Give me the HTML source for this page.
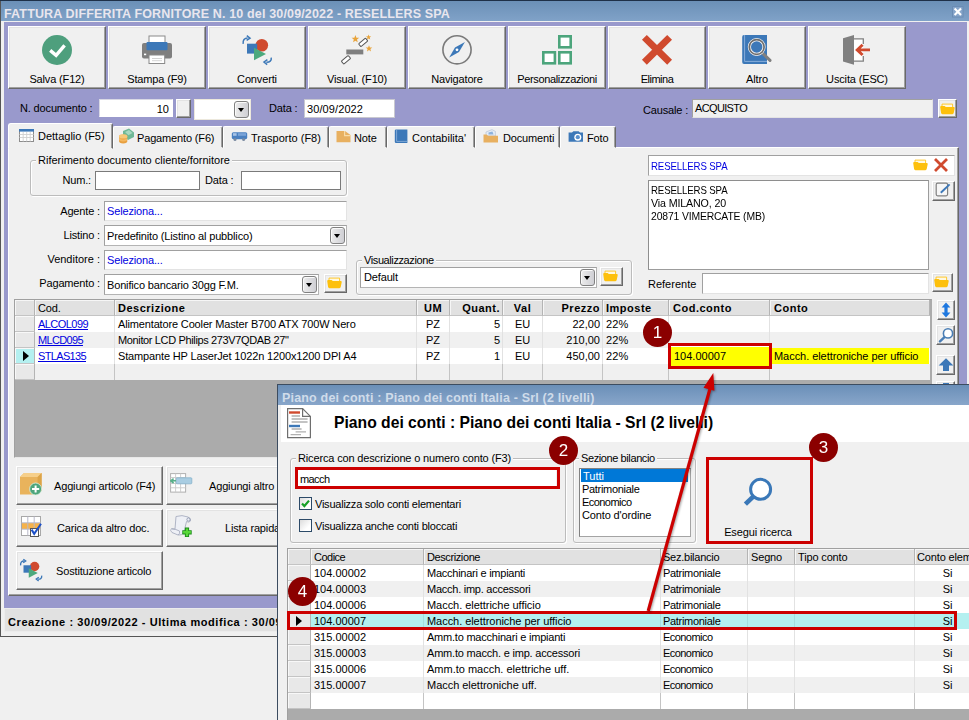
<!DOCTYPE html>
<html><head><meta charset="utf-8"><title>Fattura differita fornitore</title>
<style>
*{box-sizing:border-box;margin:0;padding:0}
html,body{width:969px;height:720px;overflow:hidden;background:#f0f0f0}
body{position:relative;font-family:"Liberation Sans",sans-serif;font-size:11px;color:#000;letter-spacing:-0.15px;line-height:13px}
.a{position:absolute;white-space:nowrap}
.btn{position:absolute;background:#f0f0f0;border:1px solid;border-color:#fff #696969 #696969 #fff;box-shadow:inset -1px -1px 0 #a0a0a0,inset 1px 1px 0 #e3e3e3}
.tb{width:98px;height:63px;top:26px}
.tb span{position:absolute;left:0;right:0;top:46px;text-align:center;font-size:11px}
.inp{position:absolute;background:#fff;border:1px solid #7a7a7a}
.sunk{position:absolute;background:#fff;border:1px solid;border-color:#a0a0a0 #e3e3e3 #e3e3e3 #a0a0a0}
.lbl{position:absolute;white-space:nowrap}
.sx{display:inline-block;transform-origin:0 50%;white-space:nowrap}
.r{text-align:right}
.tab{position:absolute;top:126px;height:22px;background:#f0f0f0;border:1px solid;border-color:#fff #696969 #f0f0f0 #fff;border-radius:2px 2px 0 0;box-shadow:inset -1px 0 0 #a0a0a0}
.tab span{position:absolute;top:5px;white-space:nowrap;font-size:11px}
.gb{position:absolute;border:1px solid #bcbcbc;border-radius:3px;box-shadow:inset 1px 1px 0 #fff,1px 1px 0 #fff}
.gb>i{position:absolute;top:-7px;left:5px;background:#f0f0f0;padding:0 2px;font-style:normal;white-space:nowrap}
.dd{position:absolute;width:15px;height:17px;background:linear-gradient(90deg,#ececec,#cfcfd4);border:1px solid #808080;border-radius:3px;box-shadow:inset 1px 1px 0 #fafafa}
.dd:after{content:"";position:absolute;left:3px;top:6px;border:3.700px solid transparent;border-top:4.200px solid #000;border-bottom:0}
.cb{border-color:#a0a0a0 #b4b4b4 #b4b4b4 #a0a0a0}
.circ{position:absolute;width:29.2px;height:29.2px;border-radius:15px;background:#8b0000;color:#fff;font-size:17px;text-align:center;line-height:29.2px;letter-spacing:0;will-change:transform}
.red{position:absolute;border:3px solid #cc0000}
</style></head><body>

<svg width="0" height="0" style="position:absolute"><defs>
<g id="fold"><path d="M2 0.600 H12.600 V4.500 H2Z" fill="#fff8e0" stroke="#ffc41a" stroke-width="0.900"/><path d="M0.200 3.400 Q0.200 2.400 1.200 2.400 H4.600 L5.800 3.600 H13.800 Q14.900 3.600 14.700 4.700 L13.700 9.600 Q13.500 10.700 12.400 10.700 H2.400 Q1.300 10.700 1.100 9.600Z" fill="#fdc00c"/></g>
</defs></svg>
<!-- main window frame -->
<div class="a" id="win" style="left:0;top:0;width:975px;height:637px;background:#f0f0f0;border:1px solid #555"></div>
<div class="a" id="title" style="left:1px;top:1px;width:968px;height:20px;background:linear-gradient(#6b90b7,#80a2c8)"></div>
<div class="a" style="left:0;top:0;width:969px;height:1px;background:#1e3048"></div>
<div class="a" id="ttext" style="left:4px;top:7px;font-weight:bold;font-size:12.5px;color:#e9e6ee;letter-spacing:0.15px;line-height:14px">FATTURA DIFFERITA FORNITORE N. 10 del 30/09/2022 - RESELLERS SPA</div>
<svg class="a" style="left:952px;top:6px" width="12" height="12"><rect x="0.5" y="0.5" width="10.500" height="10.500" fill="#86a5ca" stroke="#6a8cb4"/><path d="M2.600 2.600 L9 9 M9 2.600 L2.600 9" stroke="#fff" stroke-width="2.100"/></svg>
<div class="a" id="purple" style="left:4px;top:22px;width:963px;height:586px;background:#9999cc"></div>
<!-- status bar -->
<div class="a" style="left:4px;top:608px;width:963px;height:24px;background:#e1e1e1;border:1px solid #ececec"></div>
<div class="a" style="left:8px;top:616px;font-weight:bold;font-size:11px;letter-spacing:0.58px">Creazione : 30/09/2022 - Ultima modifica : 30/09/2022</div>

<!-- toolbar -->
<div class="btn tb" style="left:8px"><svg style="position:absolute;left:32px;top:7px" width="32" height="32" viewBox="0 0 32 32"><circle cx="16" cy="16" r="15" fill="#4e9f7d"/><path d="M9.2 16.4 L15.1 21.3 L23.6 11.4" fill="none" stroke="#fff" stroke-width="3.4"/></svg><span>Salva (F12)</span></div>
<div class="btn tb" style="left:108px"><svg style="position:absolute;left:32px;top:7px" width="32" height="32" viewBox="0 0 32 32"><rect x="8" y="2" width="16" height="7" fill="#fff" stroke="#8a8a8a" stroke-width="1"/><rect x="1" y="9" width="30" height="15.5" rx="2" fill="#7f7f7f"/><rect x="5.5" y="8" width="21" height="8.3" rx="1" fill="#3c78b8"/><rect x="8" y="21" width="15.7" height="8.5" fill="#fff" stroke="#8a8a8a" stroke-width="1"/><path d="M11 24.5h10M11 26.7h10" stroke="#c8c8c8" stroke-width="0.8"/><rect x="3" y="19.6" width="2.2" height="1.6" fill="#fff"/></svg><span>Stampa (F9)</span></div>
<div class="btn tb" style="left:208px"><svg style="position:absolute;left:32px;top:7px" width="32" height="32" viewBox="0 0 32 32"><circle cx="20.8" cy="11.3" r="6.3" fill="#d04a2e"/><rect x="6" y="9.7" width="10.2" height="9.9" fill="#3c78b8"/><path d="M13 13.8 L25 20 L13 26.2Z" fill="#4ca97d"/><path d="M2.2 9.8 C1.6 6.2 3.6 4 6.6 4" fill="none" stroke="#3c78b8" stroke-width="1.5"/><path d="M5.8 1.6 L9 4.1 L5.6 6.4" fill="none" stroke="#3c78b8" stroke-width="1.5"/><path d="M30.2 23.6 C30.8 26.8 28.6 28.4 25.4 28.2" fill="none" stroke="#3c78b8" stroke-width="1.5"/><path d="M26.4 25.6 L23 28 L26.2 30.6" fill="none" stroke="#3c78b8" stroke-width="1.5"/></svg><span>Converti</span></div>
<div class="btn tb" style="left:308px"><svg style="position:absolute;left:32px;top:7px" width="32" height="32" viewBox="0 0 32 32"><rect x="5.3" y="15.5" width="17" height="4.9" fill="#7f7f7f"/><rect x="17.700" y="6.500" width="9" height="3.800" rx="0.800" fill="#fff" stroke="#555" stroke-width="1" transform="rotate(-40 22.200 8.400)"/><rect x="0.500" y="23.900" width="9" height="3.800" rx="0.800" fill="#fff" stroke="#555" stroke-width="1" transform="rotate(-40 5 25.800)"/><path id="st" d="M0 -3.4 L0.9 -1.1 L3.3 -1 L1.4 0.5 L2 2.8 L0 1.5 L-2 2.8 L-1.4 0.5 L-3.3 -1 L-0.9 -1.1Z" fill="#e8a33a" transform="translate(14.400 5) scale(1.150)"/><path d="M0 -3.4 L0.9 -1.1 L3.3 -1 L1.4 0.5 L2 2.8 L0 1.5 L-2 2.8 L-1.4 0.5 L-3.3 -1 L-0.9 -1.1Z" fill="#e8a33a" transform="translate(27.600 3.200) scale(0.800)"/><path d="M0 -3.4 L0.9 -1.1 L3.3 -1 L1.4 0.5 L2 2.8 L0 1.5 L-2 2.8 L-1.4 0.5 L-3.3 -1 L-0.9 -1.1Z" fill="#e8a33a" transform="translate(28 14.600) scale(1)"/></svg><span>Visual. (F10)</span></div>
<div class="btn tb" style="left:408px"><svg style="position:absolute;left:32px;top:7px" width="32" height="32" viewBox="0 0 32 32"><circle cx="16" cy="15.8" r="14.1" fill="none" stroke="#7a7a7a" stroke-width="1.6"/><path d="M8.2 23.6 L14 13.6 L23.9 8 L18 18Z" fill="#3c78b8"/><circle cx="16" cy="15.8" r="1.4" fill="#fff"/></svg><span>Navigatore</span></div>
<div class="btn tb" style="left:508px"><svg style="position:absolute;left:32px;top:7px" width="32" height="32" viewBox="0 0 32 32"><g fill="#fff" stroke="#4ca57c" stroke-width="2.6"><rect x="18.3" y="2.3" width="11.4" height="11"/><rect x="2.3" y="18.3" width="11.6" height="11"/><rect x="18.3" y="18.3" width="11.4" height="11"/></g></svg><span style="letter-spacing:-0.35px">Personalizzazioni</span></div>
<div class="btn tb" style="left:608px"><svg style="position:absolute;left:32px;top:7px" width="32" height="32" viewBox="0 0 32 32"><path d="M3.400 3.400 L28.600 28.200 M28.600 3.400 L3.400 28.200" stroke="#d04a2e" stroke-width="6.900"/></svg><span style="letter-spacing:-0.5px">Elimina</span></div>
<div class="btn tb" style="left:708px"><svg style="position:absolute;left:32px;top:7px" width="32" height="32" viewBox="0 0 32 32"><path d="M3 1 H26 V30 H3 Q1.2 30 1.2 28 V3 Q1.2 1 3 1Z" fill="#3c78b8"/><path d="M3.6 1 V27.4 H26" fill="none" stroke="#8fb2dc" stroke-width="0.9"/><path d="M21 18.6 L29 26.4" stroke="#808080" stroke-width="3" stroke-linecap="round"/><circle cx="15.700" cy="13" r="7.300" fill="#3c78b8" stroke="#f4f4f4" stroke-width="3.200"/><circle cx="15.700" cy="13" r="7.400" fill="none" stroke="#6e6e6e" stroke-width="1.700"/></svg><span>Altro</span></div>
<div class="btn tb" style="left:808px"><svg style="position:absolute;left:32px;top:7px" width="32" height="32" viewBox="0 0 32 32"><rect x="13" y="4.9" width="9.3" height="22.3" fill="#fff"/><path d="M13 4.9 H22.3 V10 M22.3 22 V27.2 H13" fill="none" stroke="#808080" stroke-width="1.3"/><path d="M2 4.3 L13 1 V30.8 L2 27.5Z" fill="#808080"/><path d="M16.500 15.900 H29 M21.600 10.800 L16.200 15.900 L21.600 21" fill="none" stroke="#d04a2e" stroke-width="2.900"/></svg><span>Uscita (ESC)</span></div>


<!-- doc row -->
<div class="lbl" style="left:20px;top:102px">N. documento :</div>
<div class="a" style="left:99px;top:99px;width:74px;height:18px;background:#fff;text-align:right;padding:3px 3px 0 0;letter-spacing:0;border:1px solid #d8d8e4;border-right-color:#fff;border-bottom-color:#fff">10</div>
<div class="btn" style="left:176px;top:99px;width:15px;height:18.500px"></div>
<div class="a" style="left:194px;top:99px;width:57px;height:21px;background:#fff;border:1px solid #ece8dc"></div>
<div class="dd" style="left:234px;top:101px"></div>
<div class="lbl" style="left:269px;top:102px">Data :</div>
<div class="a" style="left:304px;top:99px;width:91px;height:19px;background:#fff;padding:3px 0 0 2px;letter-spacing:0.1px;border:1px solid #c8c8d0">30/09/2022</div>
<div class="lbl" style="left:643px;top:104px">Causale :</div>
<div class="a" style="left:692px;top:99px;width:241px;height:19px;background:#f0f0f0;border:1px solid;border-color:#a0a0a0 #e3e3e3 #e3e3e3 #a0a0a0;padding:2px 0 0 2px;letter-spacing:-0.65px">ACQUISTO</div>
<div class="btn" style="left:938px;top:99px;width:19px;height:19px"><svg class="a" style="left:1px;top:2px" width="16" height="14" viewBox="0 0 16 14"><use href="#fold" y="1.5"/></svg></div>

<!-- tab page -->
<div class="a" id="page" style="left:8px;top:147px;width:951px;height:449px;background:#f0f0f0;border:1px solid;border-color:#fff #696969 #696969 #fff;box-shadow:inset -1px -1px 0 #a0a0a0"></div>
<!-- tabs -->
<div class="tab" style="left:113px;width:110px"><span style="left:23px">Pagamento (F6)</span></div>
<div class="tab" style="left:223px;width:106px"><span style="left:27px;letter-spacing:0">Trasporto (F8)</span></div>
<div class="tab" style="left:329px;width:58px"><span style="left:24px">Note</span></div>
<div class="tab" style="left:387px;width:88px"><span style="left:24px;letter-spacing:0">Contabilita'</span></div>
<div class="tab" style="left:475px;width:85px"><span style="left:27px">Documenti</span></div>
<div class="tab" style="left:560px;width:56px"><span style="left:26px">Foto</span></div>
<div class="tab" style="left:8px;top:123px;width:105px;height:26px;border-radius:3px 2px 0 0"><span style="left:29px;top:6px;letter-spacing:0">Dettaglio (F5)</span></div>


<!-- tab icons -->
<svg class="a" style="left:19px;top:129px" width="15" height="13" viewBox="0 0 15 13"><rect x="0.5" y="0.5" width="14" height="12" fill="#fff" stroke="#8c8c8c"/><rect x="0" y="0" width="15" height="2.6" fill="#3c78b8"/><path d="M0.5 5.5h14M0.5 8.5h14M4.2 3v9.5M7.7 3v9.5M11.2 3v9.5" stroke="#d0d0d0" stroke-width="0.9"/></svg>
<svg class="a" style="left:118px;top:128px" width="17" height="16" viewBox="0 0 17 16"><path d="M5 3 L11 0.5 L16 4.5 L16 9 L10 12 L5 8Z" fill="#6fb896"/><path d="M7 4 L11 2 L14.5 5 L10.5 7.2Z" fill="#a8d8c0"/><ellipse cx="5.2" cy="13" rx="4.2" ry="2.4" fill="#e8a040"/><ellipse cx="5.2" cy="11" rx="4.2" ry="2.4" fill="#f4b860"/><ellipse cx="5.2" cy="9" rx="4.2" ry="2.4" fill="#e8a040"/><ellipse cx="5.2" cy="8.4" rx="4.2" ry="2.2" fill="#f8c878"/></svg>
<svg class="a" style="left:231px;top:131px" width="17" height="11" viewBox="0 0 17 11"><rect x="0.8" y="1.2" width="15.4" height="7" rx="1.6" fill="#4a80c0"/><rect x="2" y="2.2" width="3.6" height="2.6" fill="#a8c4e6"/><rect x="7" y="2.2" width="8" height="2.6" fill="#7aa4d8"/><circle cx="4" cy="8.6" r="1.5" fill="#7a8aa0"/><circle cx="12.6" cy="8.6" r="1.5" fill="#7a8aa0"/></svg>
<svg class="a" style="left:336px;top:130px" width="15" height="13" viewBox="0 0 15 13"><path d="M0.5 1 H9 L14.5 5 V12.2 H0.5Z" fill="#e8b060"/><path d="M8.6 1 V5.6 H14.5" fill="none" stroke="#f8dca8" stroke-width="1.2"/></svg>
<svg class="a" style="left:394px;top:129px" width="14" height="15" viewBox="0 0 14 15"><path d="M2 0.5 H13.4 V14 H2 Q0.8 14 0.8 12.8 V1.7 Q0.8 0.5 2 0.5Z" fill="#3c78b8"/><path d="M2.6 0.5 V12.4 H13.4" fill="none" stroke="#8fb2dc" stroke-width="0.8"/></svg>
<svg class="a" style="left:483px;top:129px" width="16" height="14" viewBox="0 0 16 14"><path d="M3 3 L9 0.6 L12.4 2.4 L12.4 7 H3Z" fill="#e4ecf6" stroke="#b0bcd0" stroke-width="0.6"/><path d="M5.5 3.6 L9.4 2.4 L10.6 5.6 H5.5Z" fill="#8fb2dc"/><path d="M0.5 5.4 L3.6 5.4 L5 6.8 H15 V13.4 H0.5Z" fill="#e8b060"/></svg>
<svg class="a" style="left:568px;top:130px" width="16" height="13" viewBox="0 0 16 13"><path d="M0.6 2.6 H4 L5.4 1.2 H10.6 L12 2.6 H15 V11.8 H0.6Z" fill="#3c78b8"/><circle cx="9.8" cy="7.2" r="3.5" fill="#fff"/><circle cx="9.8" cy="7.2" r="2.1" fill="#5a90cc"/></svg>


<!-- form -->
<div class="gb" style="left:30px;top:160px;width:317px;height:36px"><i style="letter-spacing:0">Riferimento documento cliente/fornitore</i></div>
<div class="lbl r" style="left:40px;width:51px;top:174px">Num.:</div>
<div class="inp" style="left:95px;top:171px;width:105px;height:19px"></div>
<div class="lbl" style="left:205px;top:174px">Data :</div>
<div class="inp" style="left:241px;top:171px;width:100px;height:19px"></div>

<div class="lbl r" style="left:29px;width:71px;top:205px">Agente :</div>
<div class="sunk" style="left:104px;top:201px;width:243px;height:20px;color:#0000e0;padding:3px 0 0 2px">Seleziona...</div>
<div class="lbl r" style="left:29px;width:71px;top:229px">Listino :</div>
<div class="sunk cb" style="left:104px;top:225px;width:243px;height:21px;padding:4px 0 0 2px">Predefinito (Listino al pubblico)</div>
<div class="dd" style="left:330px;top:227px"></div>
<div class="lbl r" style="left:29px;width:71px;top:253px" ><span style="letter-spacing:0">Venditore :</span></div>
<div class="sunk" style="left:104px;top:250px;width:243px;height:20px;color:#0000e0;padding:3px 0 0 2px">Seleziona...</div>
<div class="lbl r" style="left:29px;width:71px;top:277px">Pagamento :</div>
<div class="sunk cb" style="left:104px;top:274px;width:215px;height:21px;padding:4px 0 0 2px">Bonifico bancario 30gg F.M.</div>
<div class="dd" style="left:302px;top:276px"></div>
<div class="btn" style="left:324px;top:274px;width:23px;height:19px"><svg class="a" style="left:2px;top:1px" width="16" height="14" viewBox="0 0 16 14"><use href="#fold" y="1.5"/></svg></div>

<div class="gb" style="left:356px;top:260px;width:276px;height:35px"><i style="letter-spacing:-0.4px">Visualizzazione</i></div>
<div class="sunk cb" style="left:360px;top:267px;width:237px;height:21px;padding:3px 0 0 3px">Default</div>
<div class="dd" style="left:580px;top:269px"></div>
<div class="btn" style="left:600px;top:267px;width:23px;height:19px"><svg class="a" style="left:2px;top:1px" width="16" height="14" viewBox="0 0 16 14"><use href="#fold" y="1.5"/></svg></div>

<div class="sunk" style="left:648px;top:155px;width:307px;height:21px;color:#0000e0;padding:4px 0 0 2px"><span class="sx" style="transform:scaleX(0.878)">RESELLERS SPA</span></div>
<svg class="a" style="left:913px;top:158px" width="16" height="14" viewBox="0 0 16 14"><use href="#fold" y="1.5"/></svg>
<svg class="a" style="left:933px;top:157px" width="16" height="16" viewBox="0 0 16 16"><path d="M2 2 L14 14 M14 2 L2 14" stroke="#d04a2e" stroke-width="2.8"/></svg>
<div class="sunk" style="left:648px;top:180px;width:281px;height:90px;border-color:#8e8e8e #9c9c9c #9c9c9c #8e8e8e;padding:3px 0 0 2px;line-height:13px"><span class="sx" style="transform:scaleX(0.878)">RESELLERS SPA</span><br><span class="sx" style="transform:scaleX(0.972)">Via MILANO, 20</span><br><span class="sx" style="transform:scaleX(0.943)">20871 VIMERCATE (MB)</span></div>
<div class="btn" style="left:932px;top:181px;width:23px;height:20px"><svg class="a" style="left:2px;top:0px" width="17" height="16" viewBox="0 0 17 16"><rect x="1.200" y="1.200" width="11.400" height="12.600" rx="1.500" fill="#f6f6f6" stroke="#808080" stroke-width="1.200"/><path d="M5.800 10.800 L14.600 2.400" stroke="#3c78b8" stroke-width="1.900"/></svg></div>
<div class="lbl" style="left:648px;top:278px;letter-spacing:0">Referente</div>
<div class="sunk" style="left:702px;top:273px;width:227px;height:21px"></div>
<div class="btn" style="left:932px;top:273px;width:21px;height:19px"><svg class="a" style="left:1px;top:1px" width="16" height="14" viewBox="0 0 16 14"><use href="#fold" y="1.5"/></svg></div>

<!-- grid1 -->
<div class="a" id="g1" style="left:14px;top:299px;width:918px;height:159px;background:#ababab;border:1px solid;border-color:#a0a0a0 #ababab #e8e8e8 #a0a0a0"></div>
<div class="a" style="left:15px;top:300px;width:20px;height:16px;background:#e1e1e1;padding:2px 3px 0 3px;border-right:1px solid #b4b4b4;border-bottom:1px solid #c4c4c4;box-shadow:inset 1px 1px 0 #f6f6f6;overflow:hidden;"></div>
<div class="a" style="left:35px;top:300px;width:80px;height:16px;background:#e1e1e1;padding:2px 3px 0 3px;border-right:1px solid #b4b4b4;border-bottom:1px solid #c4c4c4;box-shadow:inset 1px 1px 0 #f6f6f6;overflow:hidden;">Cod.</div>
<div class="a" style="left:115px;top:300px;width:302px;height:16px;background:#e1e1e1;padding:2px 3px 0 3px;border-right:1px solid #b4b4b4;border-bottom:1px solid #c4c4c4;box-shadow:inset 1px 1px 0 #f6f6f6;overflow:hidden;font-weight:bold;letter-spacing:0.5px;">Descrizione</div>
<div class="a" style="left:417px;top:300px;width:33px;height:16px;background:#e1e1e1;padding:2px 3px 0 3px;text-align:center;border-right:1px solid #b4b4b4;border-bottom:1px solid #c4c4c4;box-shadow:inset 1px 1px 0 #f6f6f6;overflow:hidden;font-weight:bold;letter-spacing:0.5px;">UM</div>
<div class="a" style="left:450px;top:300px;width:53px;height:16px;background:#e1e1e1;padding:2px 2px 0 3px;text-align:right;border-right:1px solid #b4b4b4;border-bottom:1px solid #c4c4c4;box-shadow:inset 1px 1px 0 #f6f6f6;overflow:hidden;font-weight:bold;letter-spacing:0.5px;">Quant.</div>
<div class="a" style="left:503px;top:300px;width:40px;height:16px;background:#e1e1e1;padding:2px 3px 0 3px;text-align:center;border-right:1px solid #b4b4b4;border-bottom:1px solid #c4c4c4;box-shadow:inset 1px 1px 0 #f6f6f6;overflow:hidden;font-weight:bold;letter-spacing:0.5px;">Val</div>
<div class="a" style="left:543px;top:300px;width:60px;height:16px;background:#e1e1e1;padding:2px 2px 0 3px;text-align:right;border-right:1px solid #b4b4b4;border-bottom:1px solid #c4c4c4;box-shadow:inset 1px 1px 0 #f6f6f6;overflow:hidden;font-weight:bold;letter-spacing:0.5px;">Prezzo</div>
<div class="a" style="left:603px;top:300px;width:66px;height:16px;background:#e1e1e1;padding:2px 3px 0 3px;border-right:1px solid #b4b4b4;border-bottom:1px solid #c4c4c4;box-shadow:inset 1px 1px 0 #f6f6f6;overflow:hidden;font-weight:bold;letter-spacing:0.5px;">Imposte</div>
<div class="a" style="left:669px;top:300px;width:101px;height:16px;background:#e1e1e1;padding:2px 3px 0 4px;border-right:1px solid #b4b4b4;border-bottom:1px solid #c4c4c4;box-shadow:inset 1px 1px 0 #f6f6f6;overflow:hidden;font-weight:bold;letter-spacing:0.5px;">Cod.conto</div>
<div class="a" style="left:770px;top:300px;width:159.5px;height:16px;background:#e1e1e1;padding:2px 3px 0 4px;border-right:1px solid #b4b4b4;border-bottom:1px solid #c4c4c4;box-shadow:inset 1px 1px 0 #f6f6f6;overflow:hidden;font-weight:bold;letter-spacing:0.5px;">Conto</div>
<div class="a" style="left:15px;top:316px;width:20px;height:16px;background:#e8e8e8;padding:2px 3px 0 3px;border-right:1px solid #b4b4b4;border-bottom:1px solid #c4c4c4;box-shadow:inset 1px 1px 0 #f8f8f8;"></div>
<div class="a" style="left:35px;top:316px;width:80px;height:16px;background:#fff;padding:2px 3px 0 3px;border-right:1px solid #e2e2e2;"><u style="color:#0000e0;letter-spacing:-0.55px">ALCOL099</u></div>
<div class="a" style="left:115px;top:316px;width:302px;height:16px;background:#fff;padding:2px 3px 0 3px;border-right:1px solid #e2e2e2;">Alimentatore Cooler Master B700 ATX 700W Nero</div>
<div class="a" style="left:417px;top:316px;width:33px;height:16px;background:#fff;padding:2px 3px 0 3px;text-align:center;border-right:1px solid #e2e2e2;">PZ</div>
<div class="a" style="left:450px;top:316px;width:53px;height:16px;background:#fff;padding:2px 2px 0 3px;text-align:right;border-right:1px solid #e2e2e2;letter-spacing:0;">5</div>
<div class="a" style="left:503px;top:316px;width:40px;height:16px;background:#fff;padding:2px 3px 0 3px;text-align:center;border-right:1px solid #e2e2e2;">EU</div>
<div class="a" style="left:543px;top:316px;width:60px;height:16px;background:#fff;padding:2px 2px 0 3px;text-align:right;border-right:1px solid #e2e2e2;letter-spacing:0;">22,00</div>
<div class="a" style="left:603px;top:316px;width:66px;height:16px;background:#fff;padding:2px 3px 0 3px;border-right:1px solid #e2e2e2;letter-spacing:0.1px;">22%</div>
<div class="a" style="left:669px;top:316px;width:101px;height:16px;background:#fff;padding:2px 3px 0 5px;border-right:1px solid #e2e2e2;letter-spacing:0;"></div>
<div class="a" style="left:770px;top:316px;width:159.5px;height:16px;background:#fff;padding:2px 3px 0 4px;letter-spacing:-0.05px;"></div>
<div class="a" style="left:15px;top:332px;width:20px;height:16px;background:#e8e8e8;padding:2px 3px 0 3px;border-right:1px solid #b4b4b4;border-bottom:1px solid #c4c4c4;box-shadow:inset 1px 1px 0 #f8f8f8;"></div>
<div class="a" style="left:35px;top:332px;width:80px;height:16px;background:#f0f0f0;padding:2px 3px 0 3px;border-right:1px solid #e2e2e2;"><u style="color:#0000e0;letter-spacing:-0.65px">MLCD095</u></div>
<div class="a" style="left:115px;top:332px;width:302px;height:16px;background:#f0f0f0;padding:2px 3px 0 3px;border-right:1px solid #e2e2e2;letter-spacing:-0.36px;">Monitor LCD Philips 273V7QDAB 27&quot;</div>
<div class="a" style="left:417px;top:332px;width:33px;height:16px;background:#f0f0f0;padding:2px 3px 0 3px;text-align:center;border-right:1px solid #e2e2e2;">PZ</div>
<div class="a" style="left:450px;top:332px;width:53px;height:16px;background:#f0f0f0;padding:2px 2px 0 3px;text-align:right;border-right:1px solid #e2e2e2;letter-spacing:0;">5</div>
<div class="a" style="left:503px;top:332px;width:40px;height:16px;background:#f0f0f0;padding:2px 3px 0 3px;text-align:center;border-right:1px solid #e2e2e2;">EU</div>
<div class="a" style="left:543px;top:332px;width:60px;height:16px;background:#f0f0f0;padding:2px 2px 0 3px;text-align:right;border-right:1px solid #e2e2e2;letter-spacing:0;">210,00</div>
<div class="a" style="left:603px;top:332px;width:66px;height:16px;background:#f0f0f0;padding:2px 3px 0 3px;border-right:1px solid #e2e2e2;letter-spacing:0.1px;">22%</div>
<div class="a" style="left:669px;top:332px;width:101px;height:16px;background:#f0f0f0;padding:2px 3px 0 5px;border-right:1px solid #e2e2e2;letter-spacing:0;"></div>
<div class="a" style="left:770px;top:332px;width:159.5px;height:16px;background:#f0f0f0;padding:2px 3px 0 4px;letter-spacing:-0.05px;"></div>
<div class="a" style="left:15px;top:348px;width:20px;height:16px;background:#b4f0f0;padding:2px 3px 0 3px;border-right:1px solid #b4b4b4;border-bottom:1px solid #c4c4c4;box-shadow:inset 1px 1px 0 #f8f8f8;"></div>
<div class="a" style="left:35px;top:348px;width:80px;height:16px;background:#fff;padding:2px 3px 0 3px;border-right:1px solid #e2e2e2;"><u style="color:#0000e0;letter-spacing:-0.65px">STLAS135</u></div>
<div class="a" style="left:115px;top:348px;width:302px;height:16px;background:#fff;padding:2px 3px 0 3px;border-right:1px solid #e2e2e2;">Stampante HP LaserJet 1022n 1200x1200 DPI A4</div>
<div class="a" style="left:417px;top:348px;width:33px;height:16px;background:#fff;padding:2px 3px 0 3px;text-align:center;border-right:1px solid #e2e2e2;">PZ</div>
<div class="a" style="left:450px;top:348px;width:53px;height:16px;background:#fff;padding:2px 2px 0 3px;text-align:right;border-right:1px solid #e2e2e2;letter-spacing:0;">1</div>
<div class="a" style="left:503px;top:348px;width:40px;height:16px;background:#fff;padding:2px 3px 0 3px;text-align:center;border-right:1px solid #e2e2e2;">EU</div>
<div class="a" style="left:543px;top:348px;width:60px;height:16px;background:#fff;padding:2px 2px 0 3px;text-align:right;border-right:1px solid #e2e2e2;letter-spacing:0;">450,00</div>
<div class="a" style="left:603px;top:348px;width:66px;height:16px;background:#fff;padding:2px 3px 0 3px;border-right:1px solid #e2e2e2;letter-spacing:0.1px;">22%</div>
<div class="a" style="left:669px;top:348px;width:101px;height:16px;background:#ffff00;padding:2px 3px 0 5px;border-right:1px solid #e2e2e2;letter-spacing:0;"></div>
<div class="a" style="left:770px;top:348px;width:159.5px;height:16px;background:#ffff00;padding:2px 3px 0 4px;border-right:1px solid #fff;letter-spacing:-0.05px;">Macch. elettroniche per ufficio</div>
<div class="a" style="left:15px;top:364px;width:20px;height:16px;background:#e8e8e8;padding:2px 3px 0 3px;border-right:1px solid #b4b4b4;border-bottom:1px solid #c4c4c4;box-shadow:inset 1px 1px 0 #f8f8f8;"></div>
<div class="a" style="left:35px;top:364px;width:80px;height:16px;background:#f0f0f0;padding:2px 3px 0 3px;border-right:1px solid #c4c4c4;"></div>
<div class="a" style="left:115px;top:364px;width:302px;height:16px;background:#f0f0f0;padding:2px 3px 0 3px;border-right:1px solid #c4c4c4;"></div>
<div class="a" style="left:417px;top:364px;width:33px;height:16px;background:#f0f0f0;padding:2px 3px 0 3px;text-align:center;border-right:1px solid #c4c4c4;"></div>
<div class="a" style="left:450px;top:364px;width:53px;height:16px;background:#f0f0f0;padding:2px 2px 0 3px;text-align:right;border-right:1px solid #c4c4c4;letter-spacing:0;"></div>
<div class="a" style="left:503px;top:364px;width:40px;height:16px;background:#f0f0f0;padding:2px 3px 0 3px;text-align:center;border-right:1px solid #c4c4c4;"></div>
<div class="a" style="left:543px;top:364px;width:60px;height:16px;background:#f0f0f0;padding:2px 2px 0 3px;text-align:right;border-right:1px solid #c4c4c4;letter-spacing:0;"></div>
<div class="a" style="left:603px;top:364px;width:66px;height:16px;background:#f0f0f0;padding:2px 3px 0 3px;border-right:1px solid #c4c4c4;letter-spacing:0.1px;"></div>
<div class="a" style="left:669px;top:364px;width:101px;height:16px;background:#f0f0f0;padding:2px 3px 0 5px;border-right:1px solid #c4c4c4;letter-spacing:0;"></div>
<div class="a" style="left:770px;top:364px;width:159.5px;height:16px;background:#f0f0f0;padding:2px 3px 0 4px;letter-spacing:-0.05px;"></div>
<svg class="a" style="left:23px;top:351px" width="6" height="10"><path d="M0 0 L6 5 L0 10Z" fill="#000"/></svg>
<!-- /grid1 -->
<div class="red" style="left:668px;top:343px;width:104px;height:26px;background:#ffff00;padding:4px 0 0 3px;letter-spacing:0;box-shadow:inset 0 1px 0 #fff">104.00007</div>
<!-- grid side buttons -->
<div class="btn" style="left:937px;top:300px;width:18px;height:20px"><svg class="a" style="left:3px;top:1px" width="10" height="16" viewBox="0 0 10 16"><path d="M5 0.5 L9.4 5.4 H6.6 V10.6 H9.4 L5 15.5 L0.6 10.6 H3.4 V5.4 H0.6Z" fill="#1e78e0"/></svg></div>
<div class="btn" style="left:936px;top:325px;width:19px;height:20px"><svg class="a" style="left:1px;top:1px" width="16" height="16" viewBox="0 0 16 16"><path d="M7 9.6 L2 14.4" stroke="#4a7eb5" stroke-width="2.4" stroke-linecap="round"/><circle cx="10" cy="6.4" r="4.6" fill="#fff" stroke="#4a7eb5" stroke-width="1.6"/></svg></div>
<div class="btn" style="left:936px;top:355px;width:19px;height:20px"><svg class="a" style="left:1px;top:2px" width="16" height="15" viewBox="0 0 16 15"><path d="M8 0.300 L15.400 7.400 H11 V13 H5 V7.400 H0.600Z" fill="#3c78b8"/></svg></div>
<div class="btn" style="left:936px;top:381px;width:19px;height:20px"><svg class="a" style="left:1px;top:1px" width="16" height="15" viewBox="0 0 16 15"><path d="M5 0 H11 V4 H5Z" fill="#3c78b8"/></svg></div>

<!-- bottom buttons -->
<div class="btn" style="left:16px;top:466px;width:147px;height:39px"><span class="a" style="left:37px;top:13px">Aggiungi articolo (F4)</span></div>
<div class="btn" style="left:166px;top:466px;width:147px;height:39px"><span class="a" style="left:42px;top:13px">Aggiungi altro</span></div>
<div class="btn" style="left:16px;top:509px;width:147px;height:38px"><span class="a" style="left:40px;top:12px">Carica da altro doc.</span></div>
<div class="btn" style="left:166px;top:509px;width:147px;height:38px"><span class="a" style="left:58px;top:12px">Lista rapida</span></div>
<div class="btn" style="left:16px;top:551px;width:147px;height:39px"><span class="a" style="left:39px;top:13px">Sostituzione articolo</span></div>



<!-- bottom button icons -->
<svg class="a" style="left:20px;top:473px" width="23" height="23" viewBox="0 0 23 23"><path d="M0 4 L4 0 H21.600 V17.600 L17.600 21.600 H0Z" fill="#e9b35c"/><path d="M0 4 L4 0 H21.600 L17.600 4Z" fill="#f6cf8a"/><path d="M17.600 4 L21.600 0 V17.600 L17.600 21.600Z" fill="#dca448"/><circle cx="15.600" cy="16" r="6" fill="#4ea57c" stroke="#d8efe2" stroke-width="0.8"/><path d="M12 16 h7.200 M15.600 12.400 v7.200" stroke="#fff" stroke-width="2"/></svg>
<svg class="a" style="left:170px;top:473px" width="23" height="20" viewBox="0 0 23 20"><rect x="0.600" y="0.600" width="15" height="18.500" fill="#fff" stroke="#b0b0b0"/><path d="M0.600 4.500 h15 M0.600 10.500 h15 M0.600 14.800 h15 M5.600 0.600 v18.500 M10.600 0.600 v18.500" stroke="#c8c8c8" stroke-width="0.9"/><rect x="6.200" y="4.800" width="15.600" height="6" rx="0.800" fill="#a9cde2" stroke="#86b2cc" stroke-width="0.8"/><path d="M6 7.800 H2 M3.600 5.600 L0.800 7.800 L3.600 10" stroke="#58b08a" stroke-width="1.6" fill="none"/></svg>
<svg class="a" style="left:21px;top:516px" width="21" height="21" viewBox="0 0 21 21"><rect x="0.500" y="0.500" width="19" height="19" fill="#fff" stroke="#a8a8a8"/><rect x="1" y="7" width="18" height="6" fill="#f6b24a"/><path d="M0.500 6.800 h19 M0.500 13.200 h19 M6.800 0.500 v19 M13.200 0.500 v19" stroke="#b8b8c8" stroke-width="1"/><rect x="9.500" y="12.500" width="8" height="8" fill="#fff" stroke="#555" stroke-width="1"/><path d="M10.600 13.600 L13.200 17.800 L20 7.800" fill="none" stroke="#1c50c8" stroke-width="2"/></svg>
<svg class="a" style="left:170px;top:515px" width="23" height="23" viewBox="0 0 23 23"><path d="M6 1.500 Q12 -0.500 18 2 Q21 3 20.500 6 Q19 8 16.500 6.500 L14 17 Q12 21 8 20 L2 17.500 Q-0.500 15.500 1.500 13.500 L5 14Z" fill="#eef0f6" stroke="#a8aec0" stroke-width="0.9"/><path d="M2 14 Q6 14 9.500 16 Q10.500 18.500 8 20" fill="none" stroke="#a8aec0" stroke-width="0.9"/><circle cx="18.500" cy="4.500" r="1.600" fill="none" stroke="#9098b0" stroke-width="0.9"/><path d="M17 12.600 v9.400 M12.300 17.300 h9.400" stroke="#1a8a1a" stroke-width="4.200"/><path d="M17 13.400 v7.800 M13.100 17.300 h7.800" stroke="#58d838" stroke-width="2.400"/></svg>
<svg class="a" style="left:19px;top:558px" width="24" height="24" viewBox="0 0 32 32"><circle cx="20.800" cy="11.300" r="6.300" fill="#d04a2e"/><rect x="6" y="9.700" width="10.200" height="9.900" fill="#3c78b8"/><path d="M13 13.800 L25 20 L13 26.200Z" fill="#4ca97d"/><path d="M2.200 9.800 C1.600 6.200 3.600 4 6.600 4" fill="none" stroke="#3c78b8" stroke-width="1.800"/><path d="M5.800 1.600 L9 4.100 L5.600 6.400" fill="none" stroke="#3c78b8" stroke-width="1.800"/><path d="M30.200 23.600 C30.800 26.800 28.600 28.400 25.400 28.200" fill="none" stroke="#3c78b8" stroke-width="1.800"/><path d="M26.400 25.600 L23 28 L26.200 30.600" fill="none" stroke="#3c78b8" stroke-width="1.800"/></svg>

<!-- popup -->
<div class="a" id="pop" style="left:277px;top:384px;width:700px;height:340px;background:#f0f0f0;border:1px solid #3c4c60"></div>
<div class="a" style="left:278px;top:385px;width:691px;height:20px;background:linear-gradient(#6a8fb8,#88a6ca)"></div>

<div class="a" style="left:282px;top:391px;font-weight:bold;font-size:12.5px;color:#d0dcea;letter-spacing:0.18px;line-height:14px">Piano dei conti : Piano dei conti Italia - Srl (2 livelli)</div>
<div class="a" style="left:281px;top:405px;width:688px;height:37px;background:#fff"></div>
<div class="a" style="left:334px;top:413.5px;font-weight:bold;font-size:15.7px;letter-spacing:0;line-height:18px">Piano dei conti : Piano dei conti Italia - Srl (2 livelli)</div>
<svg class="a" style="left:287px;top:408px" width="25" height="31" viewBox="0 0 25 31"><path d="M0.600 0.600 H15.600 L23.400 8.400 V29.600 H0.600Z" fill="#fff" stroke="#6e6e6e" stroke-width="1.200"/><path d="M15.600 0.600 V8.400 H23.400" fill="none" stroke="#6e6e6e" stroke-width="1.200"/><path d="M2 4.500 h11" stroke="#d04a2e" stroke-width="2.400"/><path d="M4.600 8 h8.400 M4.600 11 h16 M4.600 14 h16 M4.600 21 h10 M8.600 23.800 h10.400 M3.600 26.600 h10.400" stroke="#b0b0b0" stroke-width="1.300"/><path d="M2 18 h11" stroke="#3c78b8" stroke-width="2.400"/></svg>

<div class="gb" style="left:290px;top:458px;width:276px;height:85px"><i>Ricerca con descrizione o numero conto (F3)</i></div>
<div class="a" style="left:298px;top:470px;width:258px;height:17px;background:#fff;padding:3px 0 0 2px;letter-spacing:-0.6px">macch</div>
<div class="red" style="left:295px;top:466.700px;width:265px;height:22.500px"></div>
<div class="a" style="left:299px;top:497px;width:13px;height:13px;background:linear-gradient(135deg,#dcdcdc,#fff 70%);border:1px solid #2c4a68"></div>
<svg class="a" style="left:300px;top:498px" width="11" height="11"><path d="M2 5.4 L4.4 8 L9 2.6" fill="none" stroke="#18a028" stroke-width="2.200"/></svg>
<div class="lbl" style="left:315px;top:498px;letter-spacing:-0.23px">Visualizza solo conti elementari</div>
<div class="a" style="left:299px;top:519px;width:13px;height:13px;background:linear-gradient(135deg,#dcdcdc,#fff 70%);border:1px solid #2c4a68"></div>
<div class="lbl" style="left:315px;top:520px;letter-spacing:-0.22px">Visualizza anche conti bloccati</div>

<div class="gb" style="left:573px;top:458px;width:123px;height:85px"><i style="letter-spacing:-0.4px">Sezione bilancio</i></div>
<div class="a" style="left:579px;top:468px;width:112px;height:69px;background:#fff;border:1px solid;border-color:#828282 #a4a4a4 #a4a4a4 #828282"></div>
<div class="a" style="left:581px;top:469px;width:107px;height:13px;background:#0078d7;color:#fff;padding:1px 0 0 2px;letter-spacing:0">Tutti</div>
<div class="lbl" style="left:582px;top:483px;letter-spacing:-0.3px">Patrimoniale</div>
<div class="lbl" style="left:582px;top:496px;letter-spacing:-0.55px">Economico</div>
<div class="lbl" style="left:582px;top:509px">Conto d'ordine</div>

<div class="red" style="left:706px;top:457px;width:107px;height:87px;border-width:3px"></div>
<svg class="a" style="left:741px;top:476px" width="34" height="34" viewBox="0 0 34 34"><path d="M13 19.800 L4.400 28.200" stroke="#3a78b8" stroke-width="4.600"/><circle cx="19.600" cy="13.300" r="10" fill="#fff" stroke="#3a78b8" stroke-width="3"/></svg>
<div class="lbl" style="left:706px;width:104px;top:526px;text-align:center">Esegui ricerca</div>

<!-- grid2 -->
<div class="a" id="g2" style="left:287px;top:548px;width:690px;height:180px;background:#ababab;border:1px solid;border-color:#a0a0a0 #fff #fff #a0a0a0"></div>
<div class="a" style="left:288px;top:549px;width:23px;height:16px;background:#e1e1e1;padding:2px 3px 0 3px;border-right:1px solid #b4b4b4;border-bottom:1px solid #c4c4c4;box-shadow:inset 1px 1px 0 #f6f6f6;overflow:hidden;letter-spacing:0px;"></div>
<div class="a" style="left:311px;top:549px;width:113px;height:16px;background:#e1e1e1;padding:2px 3px 0 3px;border-right:1px solid #b4b4b4;border-bottom:1px solid #c4c4c4;box-shadow:inset 1px 1px 0 #f6f6f6;overflow:hidden;letter-spacing:-0.5px;">Codice</div>
<div class="a" style="left:424px;top:549px;width:237px;height:16px;background:#e1e1e1;padding:2px 3px 0 3px;border-right:1px solid #b4b4b4;border-bottom:1px solid #c4c4c4;box-shadow:inset 1px 1px 0 #f6f6f6;overflow:hidden;letter-spacing:-0.4px;">Descrizione</div>
<div class="a" style="left:661px;top:549px;width:87px;height:16px;background:#e1e1e1;padding:2px 3px 0 2px;border-right:1px solid #b4b4b4;border-bottom:1px solid #c4c4c4;box-shadow:inset 1px 1px 0 #f6f6f6;overflow:hidden;letter-spacing:-0.25px;">Sez.bilancio</div>
<div class="a" style="left:748px;top:549px;width:47px;height:16px;background:#e1e1e1;padding:2px 3px 0 3px;border-right:1px solid #b4b4b4;border-bottom:1px solid #c4c4c4;box-shadow:inset 1px 1px 0 #f6f6f6;overflow:hidden;letter-spacing:-0.15px;">Segno</div>
<div class="a" style="left:795px;top:549px;width:120px;height:16px;background:#e1e1e1;padding:2px 3px 0 3px;border-right:1px solid #b4b4b4;border-bottom:1px solid #c4c4c4;box-shadow:inset 1px 1px 0 #f6f6f6;overflow:hidden;letter-spacing:-0.15px;">Tipo conto</div>
<div class="a" style="left:915px;top:549px;width:60px;height:16px;background:#e1e1e1;padding:2px 3px 0 2px;border-right:1px solid #b4b4b4;border-bottom:1px solid #c4c4c4;box-shadow:inset 1px 1px 0 #f6f6f6;overflow:hidden;letter-spacing:-0.15px;">Conto elementare</div>
<div class="a" style="left:288px;top:565px;width:23px;height:16px;background:#e8e8e8;padding:2px 3px 0 3px;border-right:1px solid #b4b4b4;border-bottom:1px solid #c4c4c4;box-shadow:inset 1px 1px 0 #f8f8f8;"></div>
<div class="a" style="left:311px;top:565px;width:113px;height:16px;background:#fff;padding:2px 3px 0 3px;border-right:1px solid #e2e2e2;letter-spacing:0;">104.00002</div>
<div class="a" style="left:424px;top:565px;width:237px;height:16px;background:#fff;padding:2px 3px 0 3px;border-right:1px solid #e2e2e2;letter-spacing:-0.25px;">Macchinari e impianti</div>
<div class="a" style="left:661px;top:565px;width:87px;height:16px;background:#fff;padding:2px 3px 0 2px;border-right:1px solid #e2e2e2;letter-spacing:-0.3px;">Patrimoniale</div>
<div class="a" style="left:748px;top:565px;width:47px;height:16px;background:#fff;padding:2px 3px 0 3px;border-right:1px solid #e2e2e2;"></div>
<div class="a" style="left:795px;top:565px;width:120px;height:16px;background:#fff;padding:2px 3px 0 3px;border-right:1px solid #e2e2e2;"></div>
<div class="a" style="left:915px;top:565px;width:60px;height:16px;background:#fff;padding:2px 3px 0 8px;text-align:center;">Si</div>
<div class="a" style="left:288px;top:581px;width:23px;height:16px;background:#e8e8e8;padding:2px 3px 0 3px;border-right:1px solid #b4b4b4;border-bottom:1px solid #c4c4c4;box-shadow:inset 1px 1px 0 #f8f8f8;"></div>
<div class="a" style="left:311px;top:581px;width:113px;height:16px;background:#f0f0f0;padding:2px 3px 0 3px;border-right:1px solid #e2e2e2;letter-spacing:0;">104.00003</div>
<div class="a" style="left:424px;top:581px;width:237px;height:16px;background:#f0f0f0;padding:2px 3px 0 3px;border-right:1px solid #e2e2e2;letter-spacing:-0.25px;">Macch. imp. accessori</div>
<div class="a" style="left:661px;top:581px;width:87px;height:16px;background:#f0f0f0;padding:2px 3px 0 2px;border-right:1px solid #e2e2e2;letter-spacing:-0.3px;">Patrimoniale</div>
<div class="a" style="left:748px;top:581px;width:47px;height:16px;background:#f0f0f0;padding:2px 3px 0 3px;border-right:1px solid #e2e2e2;"></div>
<div class="a" style="left:795px;top:581px;width:120px;height:16px;background:#f0f0f0;padding:2px 3px 0 3px;border-right:1px solid #e2e2e2;"></div>
<div class="a" style="left:915px;top:581px;width:60px;height:16px;background:#f0f0f0;padding:2px 3px 0 8px;text-align:center;">Si</div>
<div class="a" style="left:288px;top:597px;width:23px;height:16px;background:#e8e8e8;padding:2px 3px 0 3px;border-right:1px solid #b4b4b4;border-bottom:1px solid #c4c4c4;box-shadow:inset 1px 1px 0 #f8f8f8;"></div>
<div class="a" style="left:311px;top:597px;width:113px;height:16px;background:#fff;padding:2px 3px 0 3px;border-right:1px solid #e2e2e2;letter-spacing:0;">104.00006</div>
<div class="a" style="left:424px;top:597px;width:237px;height:16px;background:#fff;padding:2px 3px 0 3px;border-right:1px solid #e2e2e2;letter-spacing:-0.04px;">Macch. elettriche ufficio</div>
<div class="a" style="left:661px;top:597px;width:87px;height:16px;background:#fff;padding:2px 3px 0 2px;border-right:1px solid #e2e2e2;letter-spacing:-0.3px;">Patrimoniale</div>
<div class="a" style="left:748px;top:597px;width:47px;height:16px;background:#fff;padding:2px 3px 0 3px;border-right:1px solid #e2e2e2;"></div>
<div class="a" style="left:795px;top:597px;width:120px;height:16px;background:#fff;padding:2px 3px 0 3px;border-right:1px solid #e2e2e2;"></div>
<div class="a" style="left:915px;top:597px;width:60px;height:16px;background:#fff;padding:2px 3px 0 8px;text-align:center;">Si</div>
<div class="a" style="left:288px;top:613px;width:23px;height:16px;background:#e8e8e8;padding:2px 3px 0 3px;border-right:1px solid #b4b4b4;border-bottom:1px solid #c4c4c4;box-shadow:inset 1px 1px 0 #f8f8f8;"></div>
<div class="a" style="left:311px;top:613px;width:113px;height:16px;background:#b4f0f0;padding:2px 3px 0 3px;border-right:1px solid #a4dede;letter-spacing:0;">104.00007</div>
<div class="a" style="left:424px;top:613px;width:237px;height:16px;background:#b4f0f0;padding:2px 3px 0 3px;border-right:1px solid #a4dede;letter-spacing:-0.05px;">Macch. elettroniche per ufficio</div>
<div class="a" style="left:661px;top:613px;width:87px;height:16px;background:#b4f0f0;padding:2px 3px 0 2px;border-right:1px solid #a4dede;letter-spacing:-0.3px;">Patrimoniale</div>
<div class="a" style="left:748px;top:613px;width:47px;height:16px;background:#b4f0f0;padding:2px 3px 0 3px;border-right:1px solid #a4dede;"></div>
<div class="a" style="left:795px;top:613px;width:120px;height:16px;background:#b4f0f0;padding:2px 3px 0 3px;border-right:1px solid #a4dede;"></div>
<div class="a" style="left:915px;top:613px;width:60px;height:16px;background:#b4f0f0;padding:2px 3px 0 8px;text-align:center;">Si</div>
<div class="a" style="left:288px;top:629px;width:23px;height:16px;background:#e8e8e8;padding:2px 3px 0 3px;border-right:1px solid #b4b4b4;border-bottom:1px solid #c4c4c4;box-shadow:inset 1px 1px 0 #f8f8f8;"></div>
<div class="a" style="left:311px;top:629px;width:113px;height:16px;background:#fff;padding:2px 3px 0 3px;border-right:1px solid #e2e2e2;letter-spacing:0;">315.00002</div>
<div class="a" style="left:424px;top:629px;width:237px;height:16px;background:#fff;padding:2px 3px 0 3px;border-right:1px solid #e2e2e2;letter-spacing:-0.22px;">Amm.to macchinari e impianti</div>
<div class="a" style="left:661px;top:629px;width:87px;height:16px;background:#fff;padding:2px 3px 0 2px;border-right:1px solid #e2e2e2;letter-spacing:-0.55px;">Economico</div>
<div class="a" style="left:748px;top:629px;width:47px;height:16px;background:#fff;padding:2px 3px 0 3px;border-right:1px solid #e2e2e2;"></div>
<div class="a" style="left:795px;top:629px;width:120px;height:16px;background:#fff;padding:2px 3px 0 3px;border-right:1px solid #e2e2e2;"></div>
<div class="a" style="left:915px;top:629px;width:60px;height:16px;background:#fff;padding:2px 3px 0 8px;text-align:center;">Si</div>
<div class="a" style="left:288px;top:645px;width:23px;height:16px;background:#e8e8e8;padding:2px 3px 0 3px;border-right:1px solid #b4b4b4;border-bottom:1px solid #c4c4c4;box-shadow:inset 1px 1px 0 #f8f8f8;"></div>
<div class="a" style="left:311px;top:645px;width:113px;height:16px;background:#f0f0f0;padding:2px 3px 0 3px;border-right:1px solid #e2e2e2;letter-spacing:0;">315.00003</div>
<div class="a" style="left:424px;top:645px;width:237px;height:16px;background:#f0f0f0;padding:2px 3px 0 3px;border-right:1px solid #e2e2e2;letter-spacing:-0.2px;">Amm.to macch. e imp. accessori</div>
<div class="a" style="left:661px;top:645px;width:87px;height:16px;background:#f0f0f0;padding:2px 3px 0 2px;border-right:1px solid #e2e2e2;letter-spacing:-0.55px;">Economico</div>
<div class="a" style="left:748px;top:645px;width:47px;height:16px;background:#f0f0f0;padding:2px 3px 0 3px;border-right:1px solid #e2e2e2;"></div>
<div class="a" style="left:795px;top:645px;width:120px;height:16px;background:#f0f0f0;padding:2px 3px 0 3px;border-right:1px solid #e2e2e2;"></div>
<div class="a" style="left:915px;top:645px;width:60px;height:16px;background:#f0f0f0;padding:2px 3px 0 8px;text-align:center;">Si</div>
<div class="a" style="left:288px;top:661px;width:23px;height:16px;background:#e8e8e8;padding:2px 3px 0 3px;border-right:1px solid #b4b4b4;border-bottom:1px solid #c4c4c4;box-shadow:inset 1px 1px 0 #f8f8f8;"></div>
<div class="a" style="left:311px;top:661px;width:113px;height:16px;background:#fff;padding:2px 3px 0 3px;border-right:1px solid #e2e2e2;letter-spacing:0;">315.00006</div>
<div class="a" style="left:424px;top:661px;width:237px;height:16px;background:#fff;padding:2px 3px 0 3px;border-right:1px solid #e2e2e2;letter-spacing:0px;">Amm.to macch. elettriche uff.</div>
<div class="a" style="left:661px;top:661px;width:87px;height:16px;background:#fff;padding:2px 3px 0 2px;border-right:1px solid #e2e2e2;letter-spacing:-0.55px;">Economico</div>
<div class="a" style="left:748px;top:661px;width:47px;height:16px;background:#fff;padding:2px 3px 0 3px;border-right:1px solid #e2e2e2;"></div>
<div class="a" style="left:795px;top:661px;width:120px;height:16px;background:#fff;padding:2px 3px 0 3px;border-right:1px solid #e2e2e2;"></div>
<div class="a" style="left:915px;top:661px;width:60px;height:16px;background:#fff;padding:2px 3px 0 8px;text-align:center;">Si</div>
<div class="a" style="left:288px;top:677px;width:23px;height:16px;background:#e8e8e8;padding:2px 3px 0 3px;border-right:1px solid #b4b4b4;border-bottom:1px solid #c4c4c4;box-shadow:inset 1px 1px 0 #f8f8f8;"></div>
<div class="a" style="left:311px;top:677px;width:113px;height:16px;background:#f0f0f0;padding:2px 3px 0 3px;border-right:1px solid #e2e2e2;letter-spacing:0;">315.00007</div>
<div class="a" style="left:424px;top:677px;width:237px;height:16px;background:#f0f0f0;padding:2px 3px 0 3px;border-right:1px solid #e2e2e2;letter-spacing:-0.03px;">Macch elettroniche uff.</div>
<div class="a" style="left:661px;top:677px;width:87px;height:16px;background:#f0f0f0;padding:2px 3px 0 2px;border-right:1px solid #e2e2e2;letter-spacing:-0.55px;">Economico</div>
<div class="a" style="left:748px;top:677px;width:47px;height:16px;background:#f0f0f0;padding:2px 3px 0 3px;border-right:1px solid #e2e2e2;"></div>
<div class="a" style="left:795px;top:677px;width:120px;height:16px;background:#f0f0f0;padding:2px 3px 0 3px;border-right:1px solid #e2e2e2;"></div>
<div class="a" style="left:915px;top:677px;width:60px;height:16px;background:#f0f0f0;padding:2px 3px 0 8px;text-align:center;">Si</div>
<div class="a" style="left:288px;top:693px;width:23px;height:16px;background:#e8e8e8;padding:2px 3px 0 3px;border-right:1px solid #b4b4b4;border-bottom:1px solid #c4c4c4;box-shadow:inset 1px 1px 0 #f8f8f8;"></div>
<div class="a" style="left:311px;top:693px;width:113px;height:16px;background:#fff;padding:2px 3px 0 3px;border-right:1px solid #c4c4c4;letter-spacing:0;"></div>
<div class="a" style="left:424px;top:693px;width:237px;height:16px;background:#fff;padding:2px 3px 0 3px;border-right:1px solid #c4c4c4;"></div>
<div class="a" style="left:661px;top:693px;width:87px;height:16px;background:#fff;padding:2px 3px 0 3px;border-right:1px solid #c4c4c4;"></div>
<div class="a" style="left:748px;top:693px;width:47px;height:16px;background:#fff;padding:2px 3px 0 3px;border-right:1px solid #c4c4c4;"></div>
<div class="a" style="left:795px;top:693px;width:120px;height:16px;background:#fff;padding:2px 3px 0 3px;border-right:1px solid #c4c4c4;"></div>
<div class="a" style="left:915px;top:693px;width:60px;height:16px;background:#fff;padding:2px 3px 0 8px;text-align:center;"></div>
<svg class="a" style="left:296px;top:616px" width="6" height="10"><path d="M0 0 L6 5 L0 10Z" fill="#000"/></svg>
<!-- /grid2 -->
<div class="red" style="left:287px;top:610.500px;width:670px;height:19.600px;border-width:3px"></div>
<!-- arrow -->
<svg class="a" style="left:600px;top:360px;filter:drop-shadow(1.500px 1px 1px rgba(0,0,0,0.350))" width="160" height="270" viewBox="600 360 160 270"><path d="M648.200 611 L710.200 388" stroke="#cc0000" stroke-width="3.200" fill="none"/><path d="M713.300 373 L714.400 390.800 L703.500 387.800Z" fill="#cc0000"/></svg>
<div class="circ" style="left:642.9px;top:317.6px">1</div>
<div class="circ" style="left:548.9px;top:435.8px">2</div>
<div class="circ" style="left:808.9px;top:432.6px">3</div>
<div class="circ" style="left:287.9px;top:576.7px">4</div>

</body></html>
